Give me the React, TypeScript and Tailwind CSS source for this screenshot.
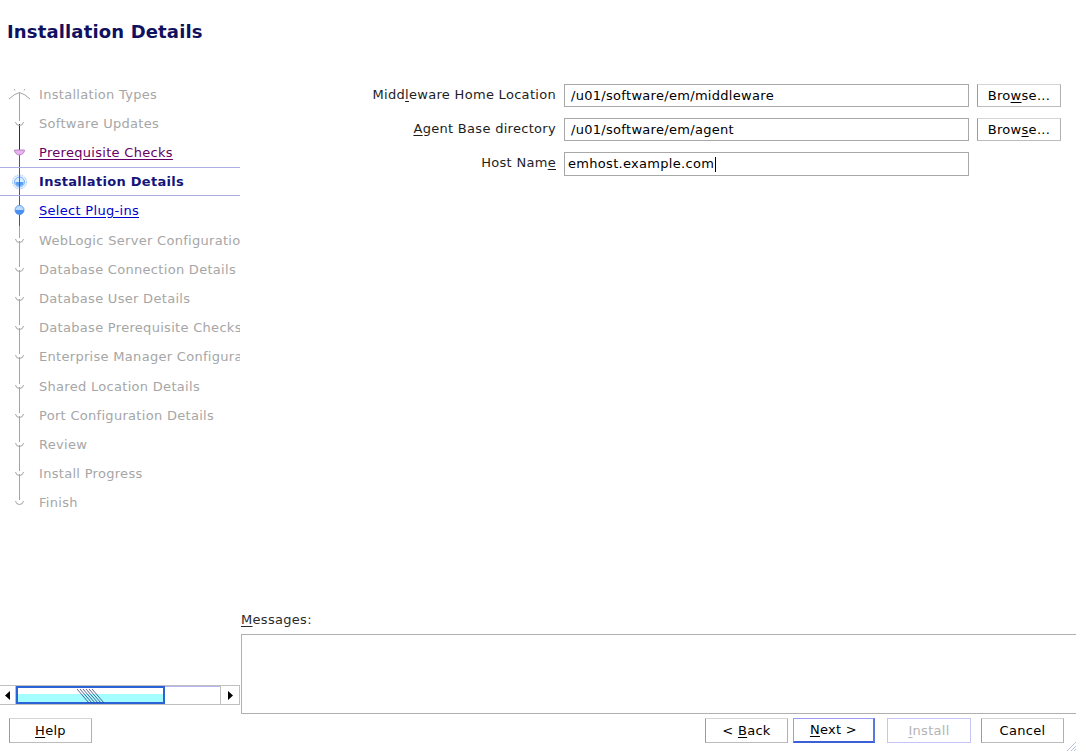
import React from "react";

const GRAY = "#a4a4a4";
const PURPLE = "#770077";
const BLUE = "#1a5ce8";

type Kind = "first" | "cup" | "prereq" | "current" | "plugins" | "last";

function StepIcon({ kind, top, bottom, h }: { kind: Kind; top?: string; bottom?: string; h: number }) {
  return (
    <svg width="38" height={h} viewBox={`0 0 38 ${h}`} className="shrink-0">
      {top && <line x1="19.5" y1="0" x2="19.5" y2="12" stroke={top} strokeWidth="1" />}
      {bottom && <line x1="19.5" y1="15" x2="19.5" y2={h} stroke={bottom} strokeWidth="1" />}
      {kind === "first" && (
        <g stroke={GRAY} strokeWidth="1" fill="none">
          <path d="M9 19 Q14 14 19.5 12.5 Q25 14 30 19" />
          <line x1="19.5" y1="12.5" x2="19.5" y2={h} />
          <line x1="14" y1="9" x2="15" y2="10.5" />
          <line x1="25" y1="9" x2="24" y2="10.5" />
        </g>
      )}
      {(kind === "cup" || kind === "last") && (
        <g stroke={GRAY} strokeWidth="1" fill="none">
          <path d="M15.5 13 Q16 16.5 19.5 16.5 Q23 16.5 23.5 13" />
        </g>
      )}
      {kind === "prereq" && (
        <g>
          <path d="M14.5 12 A5 5 0 0 0 24.5 12 Z" fill="#e6b4ea" stroke="#b070c0" strokeWidth="0.8" />
        </g>
      )}
      {kind === "current" && (
        <g>
          <circle cx="19.5" cy="14" r="7" fill="#eaf4ff" stroke="#9cc4ff" strokeWidth="1" strokeDasharray="1.5 1" />
          <circle cx="19.5" cy="14" r="5" fill="#d8ecff" stroke="#60a0ff" strokeWidth="0.8" />
          <path d="M15.5 14 A4 4 0 0 0 23.5 14 Z" fill="#5aa0f0" />
          <line x1="19.5" y1="0" x2="19.5" y2={h} stroke={BLUE} strokeWidth="1" opacity="0.9" />
        </g>
      )}
      {kind === "plugins" && (
        <g>
          <circle cx="19.5" cy="14" r="4.5" fill="#bcdcff" stroke="#4a8ef0" strokeWidth="0.8" />
          <path d="M15 14 A4.5 4.5 0 0 0 24 14 Z" fill="#4a90f0" />
        </g>
      )}
    </svg>
  );
}

type Step = { label: string; kind: Kind; style: "gray" | "visited" | "link" | "current"; top?: string; bottom?: string; h?: number };

const steps: Step[] = [
  { label: "Installation Types", kind: "first", style: "gray" },
  { label: "Software Updates", kind: "cup", style: "gray", top: GRAY, bottom: PURPLE },
  { label: "Prerequisite Checks", kind: "prereq", style: "visited", top: PURPLE, bottom: BLUE },
  { label: "Installation Details", kind: "current", style: "current", top: BLUE, bottom: BLUE },
  { label: "Select Plug-ins", kind: "plugins", style: "link", top: BLUE, bottom: BLUE, h: 30 },
  { label: "WebLogic Server Configuration Details", kind: "cup", style: "gray", top: GRAY, bottom: GRAY },
  { label: "Database Connection Details", kind: "cup", style: "gray", top: GRAY, bottom: GRAY },
  { label: "Database User Details", kind: "cup", style: "gray", top: GRAY, bottom: GRAY },
  { label: "Database Prerequisite Checks", kind: "cup", style: "gray", top: GRAY, bottom: GRAY },
  { label: "Enterprise Manager Configuration Details", kind: "cup", style: "gray", top: GRAY, bottom: GRAY, h: 30 },
  { label: "Shared Location Details", kind: "cup", style: "gray", top: GRAY, bottom: GRAY },
  { label: "Port Configuration Details", kind: "cup", style: "gray", top: GRAY, bottom: GRAY },
  { label: "Review", kind: "cup", style: "gray", top: GRAY, bottom: GRAY },
  { label: "Install Progress", kind: "cup", style: "gray", top: GRAY, bottom: GRAY },
  { label: "Finish", kind: "last", style: "gray", top: GRAY },
];

function StepRow({ s }: { s: Step }) {
  const isCur = s.style === "current";
  const h = s.h ?? 29;
  const textCls =
    s.style === "gray"
      ? "text-[#a6a6a6]"
      : s.style === "visited"
      ? "text-[#660066] underline underline-offset-2"
      : s.style === "link"
      ? "text-[#0000d0] underline underline-offset-2"
      : "text-[#14147a] font-bold";
  return (
    <div
      className={`flex items-start w-[240px] overflow-hidden whitespace-nowrap ${h === 30 ? "h-[30px]" : "h-[29px]"} ${
        isCur ? "border-t border-b border-[#aeaee6]" : ""
      }`}
    >
      <div className={`flex items-center w-full ${isCur ? "h-[27px]" : "h-[29px]"}`}>
        <StepIcon kind={s.kind} top={s.top} bottom={s.bottom} h={isCur ? 27 : h} />
        <span className={`ml-[1px] ${textCls}`}>{s.label}</span>
      </div>
    </div>
  );
}

function Btn({
  children,
  w,
  h = "h-[25px]",
  variant = "normal",
}: {
  children: React.ReactNode;
  w: string;
  h?: string;
  variant?: "normal" | "default" | "disabled";
}) {
  const cls =
    variant === "default"
      ? "border border-[#9a9af6] border-b-2 border-b-[#3d5fd6] border-r-2 border-r-[#5a78e0] text-black"
      : variant === "disabled"
      ? "border border-[#c4c4f6] text-[#b4b4b4]"
      : "border border-t-[#d4d4d4] border-l-[#9c9c9c] border-r-[#b0b0b0] border-b-[#bcbcbc] text-black";
  return (
    <div className={`${w} ${h} flex items-center justify-center bg-white whitespace-nowrap ${cls}`}>{children}</div>
  );
}

function Scrollbar() {
  return (
    <div className="flex h-[20px] w-[240px] border-t border-b border-[#c0c0c0]">
      <div className="w-[16px] h-full flex items-center justify-center border-r border-[#c0c0c0]">
        <svg width="6" height="9" viewBox="0 0 6 9">
          <path d="M5 0 L0 4.5 L5 9 Z" fill="#000" />
        </svg>
      </div>
      <div className="w-[149px] h-full border-2 border-[#2a62d8] flex flex-col relative">
        <div className="flex-1 bg-white" />
        <div className="h-[8px] bg-[#a4fdff]" />
        <svg className="absolute left-[59px] top-[1px]" width="28" height="14" viewBox="0 0 28 14">
          {[0, 3, 6, 9, 12, 15].map((x) => (
            <line key={x} x1={x} y1="0" x2={x + 12} y2="14" stroke="#3a3a7a" strokeWidth="0.8" />
          ))}
        </svg>
      </div>
      <div className="w-[55px] h-full border-t border-[#b4b4f0] bg-white" />
      <div className="w-[20px] h-full flex items-center justify-center border-l border-r border-[#c0c0c0]">
        <svg width="6" height="9" viewBox="0 0 6 9">
          <path d="M1 0 L6 4.5 L1 9 Z" fill="#000" />
        </svg>
      </div>
    </div>
  );
}

const U = ({ c }: { c: string }) => <span className="underline underline-offset-2">{c}</span>;

export default function App() {
  return (
    <div className="relative w-[1076px] h-[751px] bg-white overflow-hidden flex flex-col font-['DejaVu_Sans','Liberation_Sans',sans-serif] text-[13px] tracking-[0.3px] text-[#1e1e1e]">
      <div className="h-[66px] shrink-0 pl-[7px] pt-[21px]">
        <h1 className="text-[18px] leading-[22px] font-bold text-[#101060] tracking-[0.15px]">Installation Details</h1>
      </div>
      <div className="flex flex-1 min-h-0">
        <div className="w-[240px] shrink-0 flex flex-col pt-[14px]">
          <div className="flex-1">
            {steps.map((s) => (
              <StepRow key={s.label} s={s} />
            ))}
          </div>
          <div className="mb-[9px]">
            <Scrollbar />
          </div>
        </div>
        <div className="flex-1 flex flex-col pl-[1px]">
          <div className="pt-[18px] grid grid-cols-[315px_405px_84px] gap-x-[8px] gap-y-[11px] items-center">
            <div className="text-right pb-[3px] leading-[19px]">
              Midd<U c="l" />eware Home Location
            </div>
            <div className="h-[23px] border border-[#a8a8a8] flex items-center pl-[6px] text-black">/u01/software/em/middleware</div>
            <Btn w="w-[84px]" h="h-[23px]">
              Bro<U c="w" />se...
            </Btn>
            <div className="text-right pb-[3px] leading-[19px]">
              <U c="A" />gent Base directory
            </div>
            <div className="h-[23px] border border-[#a8a8a8] flex items-center pl-[6px] text-black">/u01/software/em/agent</div>
            <Btn w="w-[84px]" h="h-[23px]">
              Brow<U c="s" />e...
            </Btn>
            <div className="text-right pb-[3px] leading-[19px]">
              Host Nam<U c="e" />
            </div>
            <div className="h-[24px] border border-[#a8a8a8] flex items-center pl-[3px] text-black">
              emhost.example.com<span className="inline-block w-[1px] h-[15px] bg-black ml-[1px]" />
            </div>
            <div />
          </div>
          <div className="flex-1" />
          <div className="leading-[16px] mb-[6px] text-[#2a2a2a]">
            <U c="M" />essages:
          </div>
          <div className="h-[80px] border border-r-0 border-[#b0b0b0] bg-white" />
        </div>
      </div>
      <div className="h-[37px] shrink-0 flex items-start pt-[4px] pl-[9px] pr-[12px]">
        <Btn w="w-[83px]">
          <U c="H" />elp
        </Btn>
        <div className="flex-1" />
        <Btn w="w-[83px]">
          <span>&lt;&nbsp;</span>
          <U c="B" />
          <span>ack</span>
        </Btn>
        <div className="w-[5px]" />
        <Btn w="w-[82px]" variant="default">
          <U c="N" />ext &gt;
        </Btn>
        <div className="w-[12px]" />
        <Btn w="w-[84px]" variant="disabled">
          <U c="I" />nstall
        </Btn>
        <div className="w-[10px]" />
        <Btn w="w-[83px]">Cancel</Btn>
      </div>
      <svg className="absolute right-0 bottom-0" width="12" height="12" viewBox="0 0 12 12">
        <line x1="12" y1="3" x2="3" y2="12" stroke="#b8c4dc" strokeWidth="1" />
        <line x1="12" y1="7" x2="7" y2="12" stroke="#b8c4dc" strokeWidth="1" />
        <line x1="12" y1="10" x2="10" y2="12" stroke="#b8c4dc" strokeWidth="1" />
      </svg>
    </div>
  );
}
